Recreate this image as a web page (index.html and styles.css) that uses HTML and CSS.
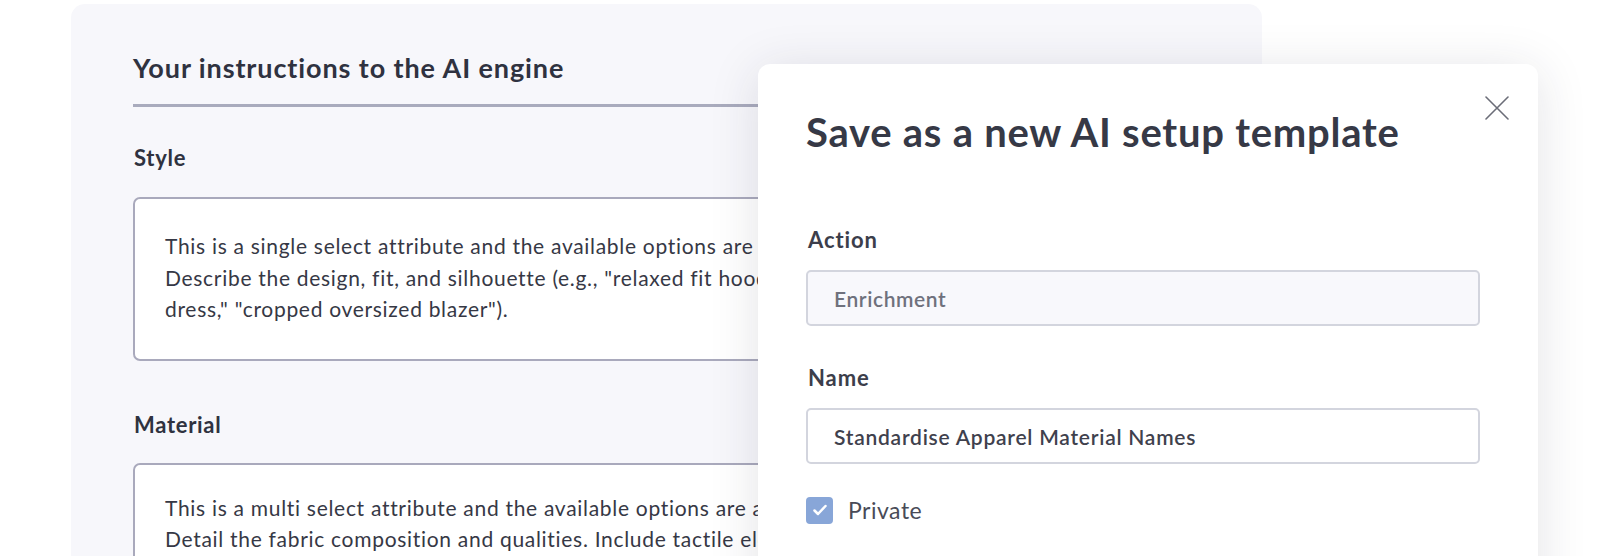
FILE: index.html
```html
<!DOCTYPE html>
<html lang="en">
<head>
<meta charset="utf-8">
<title>Save as a new AI setup template</title>
<link rel="stylesheet" href="styles.css">
</head>
<body>
<div class="stage">
  <section class="panel">
    <h2 class="panel-title">Your instructions to the AI engine</h2>
    <div class="field">
      <h3 class="field-title">Style</h3>
      <div class="prompt">This is a single select attribute and the available options are Casual, Formal, Sporty and Boho.<br>Describe the design, fit, and silhouette (e.g., "relaxed fit hoodie," "A-line midi<br>dress," "cropped oversized blazer").</div>
    </div>
    <div class="field">
      <h3 class="field-title">Material</h3>
      <div class="prompt prompt-tight">This is a multi select attribute and the available options are as listed.<br>Detail the fabric composition and qualities. Include tactile elements.<br>&nbsp;</div>
    </div>
  </section>

  <div class="modal" role="dialog" aria-label="Save as a new AI setup template">
    <button class="close" aria-label="Close">
      <svg width="24" height="24" viewBox="0 0 24 24" fill="none" stroke="#6b6d78" stroke-width="1.6" stroke-linecap="round"><path d="M1 1L23 23M23 1L1 23"/></svg>
    </button>
    <h1 class="modal-title">Save as a new AI setup template</h1>
    <div class="form">
      <label class="form-label">Action</label>
      <div class="input input-disabled">Enrichment</div>
      <label class="form-label label-name">Name</label>
      <div class="input">Standardise Apparel Material Names</div>
      <div class="check-row">
        <span class="checkbox">
          <svg width="18" height="18" viewBox="0 0 18 18" fill="none" stroke="#fff" stroke-width="2.5" stroke-linecap="round" stroke-linejoin="round"><path d="M3.5 9.5L7 13L14.5 5"/></svg>
        </span>
        <span class="check-label">Private</span>
      </div>
    </div>
  </div>
</div>
</body>
</html>
```

FILE: styles.css
```css
html, body {
  margin: 0;
  padding: 0;
  background: #ffffff;
}
body {
  font-family: "Lato", "Open Sans", sans-serif;
  color: #30323f;
}
.stage {
  position: relative;
  width: 1600px;
  height: 556px;
  overflow: hidden;
}
.panel {
  margin: 4px 0 0 71px;
  width: 1191px;
  height: 620px;
  background: #f7f7fb;
  border-radius: 14px;
  padding: 44px 32px 0 62px;
  box-sizing: border-box;
}
.panel-title {
  margin: 0;
  font-size: 27px;
  letter-spacing: 0.9px;
  font-weight: 700;
  color: #2f3240;
  line-height: 40px;
  padding-bottom: 16px;
  border-bottom: 3px solid #a9abbd;
}
.field-title {
  margin: 37px 0 0 1px;
  font-size: 22px;
  letter-spacing: 0.7px;
  font-weight: 700;
  color: #2f3240;
  line-height: 28px;
}
.field + .field .field-title {
  margin-top: 50px;
}
.prompt {
  margin-top: 25px;
  background: #ffffff;
  border: 2px solid #a9a9bc;
  border-radius: 7px;
  padding: 31px 30px 34px 30px;
  font-size: 21px;
  letter-spacing: 0.7px;
  line-height: 31.6px;
  color: #363845;
  white-space: nowrap;
  overflow: hidden;
}
.prompt-tight {
  margin-top: 24px;
  padding-top: 27px;
}
.modal {
  position: absolute;
  left: 758px;
  top: 64px;
  width: 780px;
  height: 560px;
  background: #ffffff;
  border-radius: 12px;
  box-shadow: 0 6px 50px rgba(40, 40, 60, 0.13);
  padding: 42px 58px 0 48px;
  box-sizing: border-box;
}
.close {
  position: absolute;
  right: 29px;
  top: 32px;
  width: 24px;
  height: 24px;
  padding: 0;
  border: 0;
  background: none;
  display: flex;
}
.modal-title {
  margin: 0;
  font-size: 40px;
  letter-spacing: 0.75px;
  font-weight: 700;
  color: #363946;
  line-height: 52px;
}
.form {
  display: flex;
  flex-direction: column;
  margin-top: 68px;
}
.form-label {
  font-size: 22px;
  letter-spacing: 0.9px;
  font-weight: 700;
  color: #3c3e4b;
  line-height: 28px;
  margin-left: 2px;
}
.label-name {
  margin-top: 38px;
}
.input {
  margin-top: 16px;
  height: 56px;
  box-sizing: border-box;
  border: 2px solid #d3d5de;
  border-radius: 5px;
  padding: 0 26px;
  display: flex;
  align-items: center;
  font-size: 21px;
  letter-spacing: 0.75px;
  font-weight: 600;
  color: #3f414d;
  width: 674px;
}
.input-disabled {
  background: #f8f8fc;
  color: #6f717d;
  letter-spacing: 0.6px;
}
.check-row {
  display: flex;
  align-items: center;
  gap: 15px;
  margin-top: 32px;
}
.checkbox {
  width: 27px;
  height: 27px;
  border-radius: 4px;
  background: #88a6d8;
  display: flex;
  align-items: center;
  justify-content: center;
}
.check-label {
  font-size: 23px;
  letter-spacing: 0.5px;
  color: #494b57;
}
```
